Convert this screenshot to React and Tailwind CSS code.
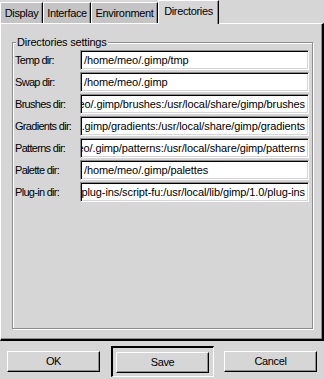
const tabs = [
  { label: "Display", w: "w-[43px]" },
  { label: "Interface", w: "w-[48px]" },
  { label: "Environment", w: "w-[67px]" },
];

const dirs = [
  { label: "Temp dir:", value: "/home/meo/.gimp/tmp" },
  { label: "Swap dir:", value: "/home/meo/.gimp" },
  { label: "Brushes dir:", value: "/home/meo/.gimp/brushes:/usr/local/share/gimp/brushes", long: true },
  { label: "Gradients dir:", value: "/home/meo/.gimp/gradients:/usr/local/share/gimp/gradients", long: true },
  { label: "Patterns dir:", value: "/home/meo/.gimp/patterns:/usr/local/share/gimp/patterns", long: true },
  { label: "Palette dir:", value: "/home/meo/.gimp/palettes" },
  { label: "Plug-in dir:", value: "/home/meo/.gimp/plug-ins/script-fu:/usr/local/lib/gimp/1.0/plug-ins", long: true },
];

const btn =
  "w-[93px] h-[21px] bg-[#d6d6d6] border border-t-white border-l-white border-r-black border-b-black shadow-[inset_-1px_-1px_0_#8e8e8e] flex items-center justify-center";

const Field = ({ value, long }) => (
  <div
    className={`h-[20px] bg-white border border-t-[#8e8e8e] border-l-[#8e8e8e] border-r-white border-b-white shadow-[inset_1px_1px_0_#000,inset_-1px_-1px_0_#d6d6d6] flex items-center overflow-hidden whitespace-nowrap px-[3px] tracking-[-0.1px] ${
      long ? "justify-end" : "justify-start"
    }`}
  >
    <span className="shrink-0">{value}</span>
  </div>
);

export default function App() {
  return (
    <div className="w-[324px] h-[379px] bg-[#d6d6d6] flex flex-col text-black text-[11px] tracking-[-0.35px] font-['Liberation_Sans',Arial,sans-serif] overflow-hidden">
      <div className="h-[341px] flex flex-col">
        <div className="h-[23px] flex items-end">
          {tabs.map((t) => (
            <div
              key={t.label}
              className={`${t.w} h-[21px] bg-[#c4c4c4] border-l border-t border-l-white border-t-white border-r border-r-black shadow-[inset_-1px_0_0_#8e8e8e] flex items-center justify-center`}
            >
              {t.label}
            </div>
          ))}
          <div className="w-[61px] h-[24px] -mb-px relative z-10 bg-[#d6d6d6] border-l border-t border-l-white border-t-white border-r border-r-black shadow-[inset_-1px_0_0_#8e8e8e] flex items-center justify-center pb-[2px]">
            Directories
          </div>
        </div>
        <div className="flex-1 border-l border-t border-l-white border-t-white border-r-2 border-b-2 border-r-black border-b-black shadow-[inset_-1px_-1px_0_#8e8e8e] pl-[11px] pr-[9px] pt-[18px] pb-[10px]">
          <div className="relative h-full border border-[#8e8e8e] shadow-[inset_1px_1px_0_#fff,1px_1px_0_#fff] pl-[2px] pr-[1px] pt-[7px]">
            <span className="absolute -top-[8px] left-[3px] bg-[#d6d6d6] px-[1px] leading-[14px] tracking-[-0.2px]">
              Directories settings
            </span>
            <div className="grid grid-cols-[65px_229px] gap-y-[2px]">
              {dirs.map((d) => (
                <div key={d.label} className="contents">
                  <div className="h-[20px] flex items-center whitespace-nowrap tracking-[-0.7px]">{d.label}</div>
                  <Field value={d.value} long={d.long} />
                </div>
              ))}
            </div>
          </div>
        </div>
      </div>
      <div className="flex-1 flex items-center justify-between px-[7px] pt-[3px]">
        <button className={btn}>OK</button>
        <div className="w-[103px] h-[31px] border-t-2 border-l-2 border-t-black border-l-black border-r border-b border-r-white border-b-white flex items-center justify-center">
          <button className={`${btn} w-[92px]`}>Save</button>
        </div>
        <button className={btn}>Cancel</button>
      </div>
    </div>
  );
}
